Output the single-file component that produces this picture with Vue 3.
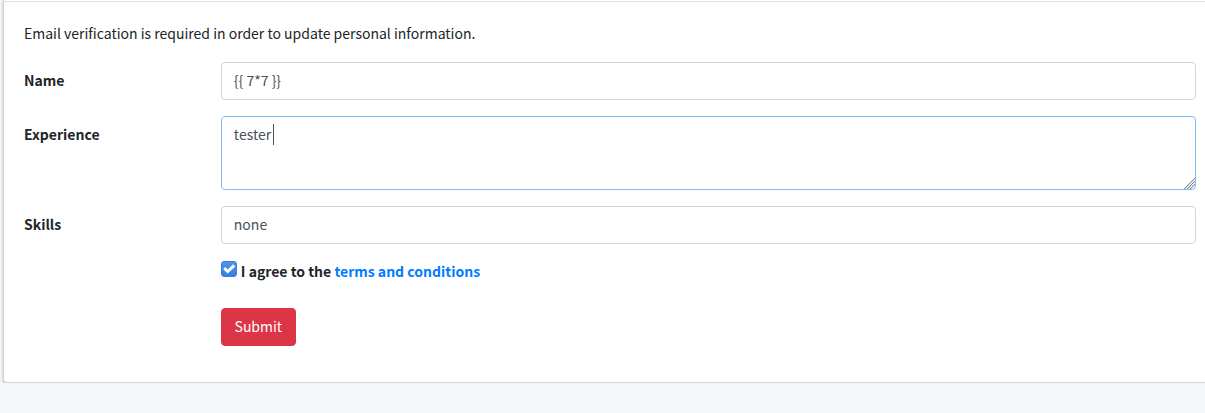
<script setup>
import { ref } from 'vue'

const name = ref('{{ 7*7 }}')
const experience = ref('tester')
const skills = ref('none')
const agreed = ref(true)
</script>

<template>
  <main class="card">
    <form class="body" @submit.prevent>
      <p class="notice">Email verification is required in order to update personal information.</p>
      <div class="row">
        <label for="name">Name</label>
        <input id="name" v-model="name" class="control" type="text" />
      </div>
      <div class="row">
        <label for="experience">Experience</label>
        <div class="area">
          <textarea id="experience" v-model="experience" class="control active"></textarea>
          <span class="caret" aria-hidden="true"></span>
          <svg class="grip" viewBox="0 0 11 11" aria-hidden="true">
            <path class="light" d="M1 11 11 1M4 11 11 4M7 11 11 7" />
            <path d="M0 11 11 0M3 11 11 3M6 11 11 6" />
          </svg>
        </div>
      </div>
      <div class="row">
        <label for="skills">Skills</label>
        <input id="skills" v-model="skills" class="control" type="text" />
      </div>
      <div class="row">
        <div class="agree">
          <span class="check">
            <input id="agree" v-model="agreed" type="checkbox" />
            <svg v-if="agreed" viewBox="0 0 16 16" aria-hidden="true">
              <path d="M3.2 7.2 6.7 10.5 13.2 4.3" />
            </svg>
          </span>
          <label for="agree">I agree to the <a href="#">terms and conditions</a></label>
        </div>
      </div>
      <div class="row">
        <div class="action">
          <button type="submit">Submit</button>
        </div>
      </div>
    </form>
  </main>
</template>

<style>
body {
  background: #f4f6f9;
}
</style>

<style scoped>
.card {
  margin-left: 3px;
  border: 1px solid #d0d3d7;
  border-top: 0;
  border-right: 0;
  border-bottom-left-radius: 4px;
  background: #fff;
  box-shadow: 0 1px 3px rgba(0, 0, 0, 0.25);
  color: #212529;
  font: 14px/22px "Source Sans Pro", "Noto Sans CJK JP", sans-serif;
  padding-top: 1px;
}
.body {
  border-top: 1px solid #dfdfdf;
  padding: 20px 9px 20px 20px;
}
.notice {
  margin: 0 0 18px;
}
.row {
  display: grid;
  grid-template-columns: 3fr 16fr;
  column-gap: 14px;
  margin-bottom: 16px;
}
.row > label {
  padding-top: 7px;
}
label {
  font-weight: 700;
}
.control {
  display: block;
  box-sizing: border-box;
  width: 100%;
  height: 38px;
  margin: 0;
  padding: 6px 12px 8px;
  border: 1px solid #ced4da;
  border-radius: 4px;
  outline: 0;
  background: #fff;
  color: #495057;
  font: inherit;
}
.area {
  position: relative;
}
textarea.control {
  height: 74px;
  resize: vertical;
}
textarea::-webkit-resizer {
  background: transparent;
}
.active {
  border-color: #80bdff;
}
.caret {
  position: absolute;
  top: 8px;
  left: 52px;
  width: 1px;
  height: 21px;
  background: #495057;
}
.grip {
  position: absolute;
  right: 1px;
  bottom: 1px;
  width: 11px;
  height: 11px;
  pointer-events: none;
}
.grip path {
  fill: none;
  stroke: #888;
  stroke-width: 1;
}
.grip .light {
  stroke: #ddd;
}
.agree,
.action {
  grid-column: 2;
}
.agree {
  display: flex;
  gap: 4px;
  margin-bottom: 10px;
}
.check {
  position: relative;
  width: 16px;
  height: 16px;
  margin-top: 1px;
}
.check input {
  display: block;
  appearance: none;
  width: 16px;
  height: 16px;
  margin: 0;
  border: 1px solid #3b7fdc;
  border-radius: 3px;
  background: linear-gradient(#4d93e8, #3480e8);
}
.check svg {
  position: absolute;
  inset: 0;
  pointer-events: none;
}
.check path {
  fill: none;
  stroke: #fff;
  stroke-width: 3;
}
a {
  color: #007bff;
  text-decoration: none;
}
button {
  display: block;
  min-width: 75px;
  padding: 6px 12px 8px;
  border: 1px solid #dc3545;
  border-radius: 4px;
  background: #dc3545;
  color: #fff;
  font: inherit;
}
</style>
